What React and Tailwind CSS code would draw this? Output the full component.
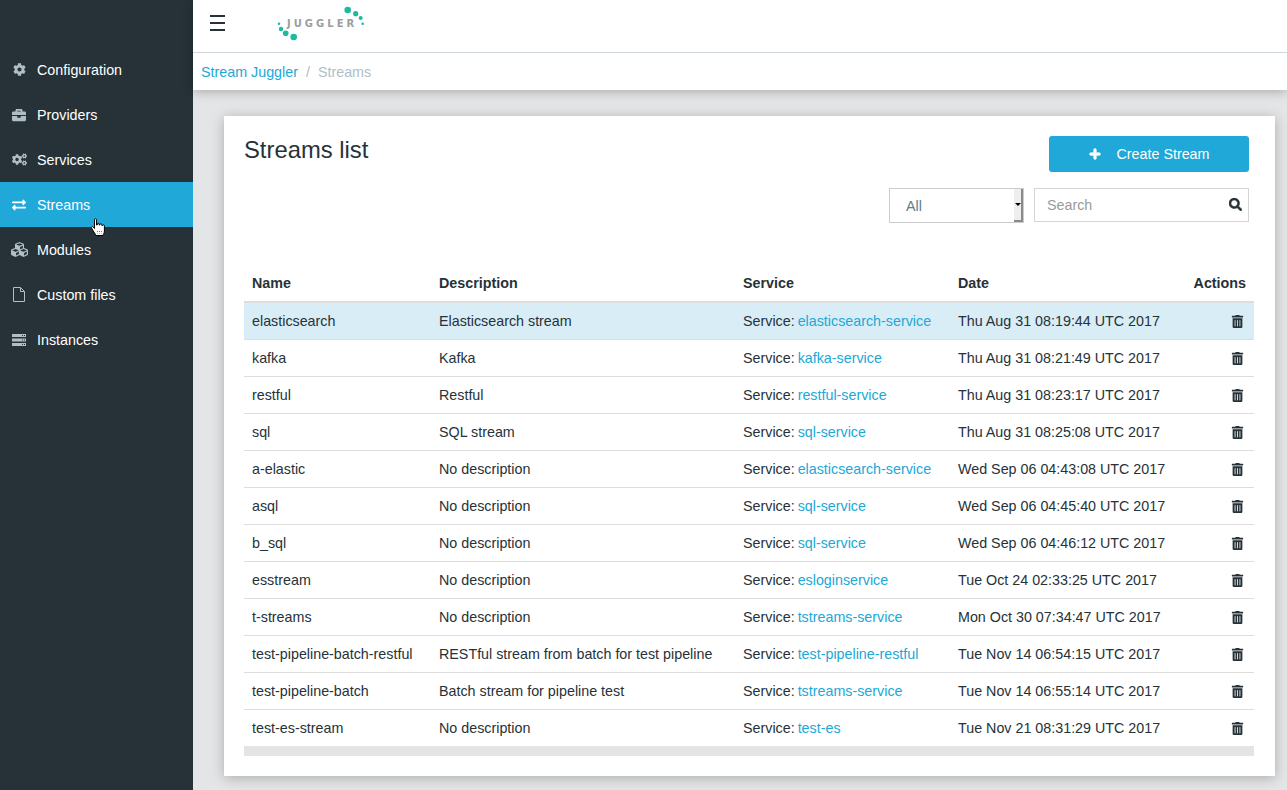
import { FaCog, FaBriefcase, FaCogs, FaExchangeAlt, FaCubes, FaTrashAlt, FaSearch, FaPlus } from "react-icons/fa";

function FileIcon({ className }) {
  return (
    <svg className={className} width="12" height="15" viewBox="0 0 12 15" fill="none" stroke="currentColor">
      <path d="M.5 .5H7.500L11.500 4.500V14.500H.5ZM7.500 .5V4.500H11.500" />
    </svg>
  );
}

function ServerIcon({ className }) {
  return (
    <svg className={className} width="14" height="14" viewBox="0 0 14 14" fill="currentColor">
      <path d="M0 1h14v3H0ZM0 5.500h14v3H0ZM0 10h14v3H0Z" />
      <path d="M10 2h1v1h-1ZM12 2h1v1h-1ZM10 6.500h1v1h-1ZM12 6.500h1v1h-1ZM10 11h1v1h-1ZM12 11h1v1h-1Z" fill="#263238" />
    </svg>
  );
}

const navItems = [
  { label: "Configuration", icon: FaCog, size: "text-[13px]" },
  { label: "Providers", icon: FaBriefcase, size: "text-[14px]" },
  { label: "Services", icon: FaCogs, size: "text-[15px]" },
  { label: "Streams", icon: FaExchangeAlt, size: "text-[14px]", active: true },
  { label: "Modules", icon: FaCubes, size: "text-[17px]" },
  { label: "Custom files", icon: FileIcon, size: "" },
  { label: "Instances", icon: ServerIcon, size: "" },
];

const streams = [
  ["elasticsearch", "Elasticsearch stream", "elasticsearch-service", "Thu Aug 31 08:19:44 UTC 2017"],
  ["kafka", "Kafka", "kafka-service", "Thu Aug 31 08:21:49 UTC 2017"],
  ["restful", "Restful", "restful-service", "Thu Aug 31 08:23:17 UTC 2017"],
  ["sql", "SQL stream", "sql-service", "Thu Aug 31 08:25:08 UTC 2017"],
  ["a-elastic", "No description", "elasticsearch-service", "Wed Sep 06 04:43:08 UTC 2017"],
  ["asql", "No description", "sql-service", "Wed Sep 06 04:45:40 UTC 2017"],
  ["b_sql", "No description", "sql-service", "Wed Sep 06 04:46:12 UTC 2017"],
  ["esstream", "No description", "esloginservice", "Tue Oct 24 02:33:25 UTC 2017"],
  ["t-streams", "No description", "tstreams-service", "Mon Oct 30 07:34:47 UTC 2017"],
  ["test-pipeline-batch-restful", "RESTful stream from batch for test pipeline", "test-pipeline-restful", "Tue Nov 14 06:54:15 UTC 2017"],
  ["test-pipeline-batch", "Batch stream for pipeline test", "tstreams-service", "Tue Nov 14 06:55:14 UTC 2017"],
  ["test-es-stream", "No description", "test-es", "Tue Nov 21 08:31:29 UTC 2017"],
];

function Logo() {
  return (
    <div className="relative w-[90px] h-[42px]">
      <svg className="absolute inset-0" width="90" height="42" viewBox="0 0 90 42" fill="#1abc9c">
        <circle cx="3" cy="22.700" r="1.300" />
        <circle cx="5" cy="28" r="2.200" />
        <circle cx="9.700" cy="32.300" r="2.800" />
        <circle cx="17.700" cy="36" r="3.300" />
        <circle cx="71.700" cy="9" r="3.300" />
        <circle cx="79.700" cy="12.700" r="2.600" />
        <circle cx="84.700" cy="17" r="2" />
        <circle cx="86.700" cy="22.700" r="1.300" />
      </svg>
      <span className="absolute left-[11px] top-[16px] text-[10px] leading-[14px] font-bold tracking-[3px] text-[#9a9ea1] [font-family:'DejaVu_Sans',sans-serif]">JUGGLER</span>
    </div>
  );
}

function HandCursor() {
  return (
    <svg className="absolute left-[90px] top-[36px]" width="18" height="19" viewBox="0 0 17 19">
      <path d="M4 1.500c0-1 2-1 2 0V7h.8V6c0-1 1.900-1 1.900 0v1h.7V6.500c0-1 1.900-1 1.900 0v1h.7c0-1 1.900-1 1.900 .2V13c0 2-1 3-1.500 4.500H5.500L2.500 12.500 1 10c-.6-1 .8-2 1.800-1L4 10.500Z" fill="#fff" stroke="#000" strokeWidth="1" />
      <path d="M7 13v2.500M9 13v2.500M11 13v2.500" stroke="#777" strokeWidth="1" strokeDasharray="1 1" />
    </svg>
  );
}

function Sidebar() {
  return (
    <aside className="w-[193px] shrink-0 bg-[#263238] pt-[47px]">
      {navItems.map((item) => {
        const Icon = item.icon;
        return (
          <div key={item.label} className={`relative flex items-center h-[45px] pl-[12px] ${item.active ? "bg-[#20a8d8] text-white" : "text-white"}`}>
            <span className="w-[14px] flex justify-center">
              <Icon className={`shrink-0 ${item.size} ${item.active ? "text-white" : "text-[#b0bec5]"}`} />
            </span>
            <span className="ml-[11px]">{item.label}</span>
            {item.active && <HandCursor />}
          </div>
        );
      })}
    </aside>
  );
}

function Header() {
  return (
    <div className="bg-white shadow-[0_2px_10px_rgba(0,0,0,0.25)]">
      <div className="flex items-center h-[53px] border-b border-[#cfd8dc]">
        <span className="ml-[17px] -mt-[6px] w-[15px] flex flex-col gap-[5px]">
          <span className="h-[2px] bg-[#263238]" />
          <span className="h-[2px] bg-[#263238]" />
          <span className="h-[2px] bg-[#263238]" />
        </span>
        <div className="ml-[51px] -mt-[8px]">
          <Logo />
        </div>
      </div>
      <div className="flex items-center h-[37px] pl-[8px]">
        <span className="text-[#20a8d8]">Stream Juggler</span>
        <span className="mx-[8px] text-[#b0bec5]">/</span>
        <span className="text-[#b0bec5]">Streams</span>
      </div>
    </div>
  );
}

function StreamsTable() {
  return (
    <table className="w-[1010px] table-fixed border-collapse">
      <colgroup>
        <col className="w-[187px]" />
        <col className="w-[304px]" />
        <col className="w-[215px]" />
        <col className="w-[224px]" />
        <col className="w-[80px]" />
      </colgroup>
      <thead>
        <tr className="h-[38px] border-b-2 border-[#dddddd] font-bold text-left">
          <th className="px-[8px]">Name</th>
          <th className="px-[8px]">Description</th>
          <th className="px-[8px]">Service</th>
          <th className="px-[8px]">Date</th>
          <th className="px-[8px] text-right">Actions</th>
        </tr>
      </thead>
      <tbody>
        {streams.map((row, i) => (
          <tr key={row[0]} className={`h-[37px] ${i < streams.length - 1 ? "border-b border-[#dddddd]" : ""} ${i === 0 ? "bg-[#d9edf7]" : ""}`}>
            <td className="px-[8px]">{row[0]}</td>
            <td className="px-[8px]">{row[1]}</td>
            <td className="px-[8px]">
              Service: <span className="-ml-px text-[#20a8d8]">{row[2]}</span>
            </td>
            <td className="px-[8px] whitespace-nowrap">{row[3]}</td>
            <td className="pr-[10px]">
              <FaTrashAlt className="ml-auto mt-[1px] text-[13px]" />
            </td>
          </tr>
        ))}
      </tbody>
    </table>
  );
}

export default function App() {
  return (
    <div className="flex h-[790px] overflow-hidden bg-[#e4e5e6] text-[14.300px] leading-[20px] text-[#263238] font-['Liberation_Sans',Arial,sans-serif]">
      <Sidebar />
      <main className="flex-1 min-w-0">
        <Header />
        <div className="mt-[26px] ml-[31px] mr-[12px] h-[660px] bg-white pl-[20px] pr-[26px] pt-[20px] shadow-[0_2px_12px_rgba(0,0,0,0.25)]">
          <div className="flex justify-between items-start">
            <h1 className="text-[23.800px] leading-[27px]">Streams list</h1>
            <button className="flex items-center justify-center w-[200px] h-[36px] bg-[#20a8d8] rounded-[3px] text-white">
              <FaPlus className="text-[12px] mr-[16px] stroke-[40px]" />
              Create Stream
            </button>
          </div>
          <div className="flex justify-end gap-[10px] mt-[16px]">
            <div className="flex items-stretch w-[135px] h-[35px] border border-[#cccccc] text-[#607d8b]">
              <span className="flex-1 flex items-center pl-[16px]">All</span>
              <span className="w-[9px] flex items-center justify-center bg-[#eeeeee] border-r-2 border-b-2 border-[#8a8a8a]">
                <span className="border-x-[3px] border-t-[3px] border-x-transparent border-t-black" />
              </span>
            </div>
            <div className="relative flex items-center w-[215px] h-[34px] border border-[#d5d5d5] pl-[12px] text-[#9a9a9a]">
              Search
              <FaSearch className="absolute right-[6px] top-[9px] text-[13px] text-[#263238] stroke-[20px]" />
            </div>
          </div>
          <div className="mt-[41px]">
            <StreamsTable />
            <div className="w-[1010px] h-[10px] bg-[#e4e4e4]" />
          </div>
        </div>
      </main>
    </div>
  );
}
